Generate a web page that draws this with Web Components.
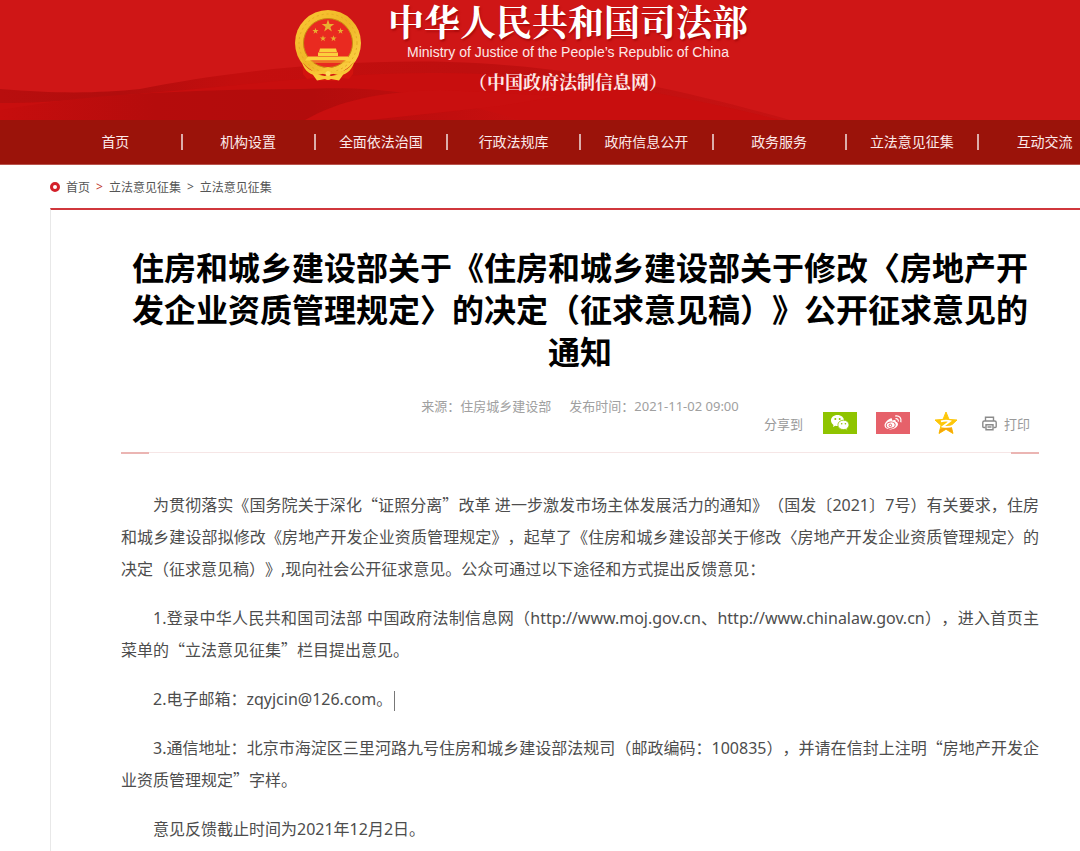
<!DOCTYPE html>
<html lang="zh-CN">
<head>
<meta charset="utf-8">
<title>中华人民共和国司法部</title>
<style>
  body {
    margin: 0;
    background: #fff;
    color: #4d4d4d;
    font-family: "Noto Sans", "Noto Sans CJK SC", sans-serif;
    text-spacing-trim: space-all;
    overflow-x: hidden;
  }
</style>
</head>
<body>
<moj-page></moj-page>

<script>
class MojEmblem extends HTMLElement {
  constructor() {
    super();
    this.attachShadow({ mode: "open" });
    this.shadowRoot.innerHTML = `
      <style>
        :host { display: block; }
        svg { display: block; width: 68px; height: 72px; }
      </style>
      <svg viewBox="0 0 68 72" role="img" aria-label="国徽">
        <defs>
          <linearGradient id="gold" x1="0" y1="0" x2="1" y2="1">
            <stop offset="0" stop-color="#fbc936"/>
            <stop offset=".5" stop-color="#efb526"/>
            <stop offset="1" stop-color="#ffd84c"/>
          </linearGradient>
          <path id="star" d="M0-6 1.4-1.9 5.7-1.9 2.2.8 3.5 4.9 0 2.4-3.5 4.9-2.2.8-5.7-1.9-1.4-1.9Z"/>
        </defs>
        <circle cx="34" cy="33" r="33" fill="url(#gold)"/>
        <circle cx="34" cy="33" r="29" fill="none" stroke="#e3ab22" stroke-width="1" stroke-dasharray="2 3"/>
        <path d="M8 52Q20 66 34 64 48 66 60 52L59 64 55 69 48 68 42 71H26L20 68 13 69 9 64Z" fill="#d3130e"/>
        <circle cx="34" cy="33" r="24.500" fill="#e92a20" stroke="#c98a12"/>
        <g fill="#e8b031">
          <use href="#star" transform="translate(34 16) scale(1.100)"/>
          <use href="#star" transform="translate(21.500 21) scale(.55)"/>
          <use href="#star" transform="translate(46.500 21) scale(.55)"/>
          <use href="#star" transform="translate(29 28.500) scale(.55)"/>
          <use href="#star" transform="translate(39.500 28.500) scale(.55)"/>
        </g>
        <path d="M26 38.500h16l1 3.500H25ZM24 42.500h20v3.500H24ZM14 46.500h40l3 4H11Z" fill="#fbd03c"/>
        <path d="M12 52h44" stroke="#f3b92d"/>
        <path d="M7 49c5 11 14 15 22 11q2-3 5-3t5 3c8 4 17 0 22-11-2 12-11 19-21 15q-3-4-6-4t-6 4C18 68 9 61 7 49Z" fill="#f7c535"/>
        <path d="M18 63.500 31 66q3-2 6 0l13-2.500-5 7-8-1.500q-3 2-6 0l-8 1.500Z" fill="#f9cc38"/>
        <circle cx="34" cy="63.500" r="2.500" fill="#ffdc58"/>
      </svg>
    `;
  }
}

class MojBanner extends HTMLElement {
  constructor() {
    super();
    this.attachShadow({ mode: "open" });
    this.shadowRoot.innerHTML = `
      <style>
        :host {
          display: grid;
          height: 120px;
          background: #cf1616;
          overflow: hidden;
        }
        .wave, .brand { grid-area: 1 / 1; }
        .wave { width: 100%; height: 120px; }
        .brand {
          display: flex;
          align-items: flex-start;
          justify-content: center;
          gap: 26px;
          padding-right: 38px;
          color: #fff;
        }
        moj-emblem { margin-top: 10px; }
        .names { display: flex; flex-direction: column; align-items: center; }
        h1 {
          margin: 0;
          font: 700 36px/42px "Noto Serif CJK SC", "Noto Sans CJK SC", serif;
          text-shadow: 1px 2px 2px #8008;
        }
        p { margin: 0; }
        .en { font: 14px/20px "Liberation Sans", sans-serif; color: #fde8e8; }
        .sub {
          margin-top: 7px;
          font: 700 18px/24px "Noto Serif CJK SC", "Noto Sans CJK SC", serif;
          color: #fde8e8;
        }
      </style>
      <svg class="wave" viewBox="0 0 1080 120" preserveAspectRatio="none" aria-hidden="true">
        <defs>
          <linearGradient id="far" x1="0" x2="1" y1="0" y2="0">
            <stop offset="0" stop-color="#b80e0e"/>
            <stop offset=".15" stop-color="#b20d0d"/>
            <stop offset=".3" stop-color="#c40e0e"/>
            <stop offset=".6" stop-color="#be0f0f"/>
            <stop offset="1" stop-color="#c61212"/>
          </linearGradient>
          <linearGradient id="near" x1="0" x2="1" y1="0" y2="0">
            <stop offset="0" stop-color="#c60d0d"/>
            <stop offset=".3" stop-color="#b50c0c"/>
            <stop offset=".6" stop-color="#b20c0c"/>
            <stop offset="1" stop-color="#c80f0f"/>
          </linearGradient>
        </defs>
        <path d="M0 89C60 94 100 93 140 89 220 73 330 59 450 62 580 66 690 92 790 120H0Z" fill="url(#far)"/>
        <path d="M0 103C60 103 100 97 160 92 260 84 330 73 440 73 580 74 690 98 780 120H0Z" fill="#c80e0e"/>
        <path d="M0 110C90 94 180 90 300 89 370 86 420 90 520 120H0Z" fill="url(#near)"/>
        <path d="M305 120C340 100 380 92 440 90L560 96 500 106 370 120Z" fill="#c90f0f"/>
      </svg>
      <div class="brand">
        <moj-emblem></moj-emblem>
        <div class="names">
          <h1>中华人民共和国司法部</h1>
          <p class="en" lang="en">Ministry of Justice of the People’s Republic of China</p>
          <p class="sub">（中国政府法制信息网）</p>
        </div>
      </div>
    `;
  }
}

class MojNav extends HTMLElement {
  constructor() {
    super();
    this.attachShadow({ mode: "open" });
    const items = ["首页", "机构设置", "全面依法治国", "行政法规库", "政府信息公开", "政务服务", "立法意见征集", "互动交流"];
    this.shadowRoot.innerHTML = `
      <style>
        :host { display: block; background: #9b130a; border-bottom: 1px solid #b9534c; }
        nav { display: flex; align-items: center; height: 44px; margin: 0 -30px 0 50px; }
        a {
          flex: 1 1 0;
          text-align: center;
          font-size: 14px;
          line-height: 16px;
          color: #fbeaea;
          text-decoration: none;
          white-space: nowrap;
        }
        a:not(:last-child) { border-right: 2px solid #dcaeab; }
      </style>
      <nav>${items.map(t => `<a href="#">${t}</a>`).join("")}</nav>
    `;
  }
}

class MojCrumbs extends HTMLElement {
  constructor() {
    super();
    this.attachShadow({ mode: "open" });
    this.shadowRoot.innerHTML = `
      <style>
        :host { display: block; }
        nav {
          display: flex;
          align-items: center;
          gap: 6px;
          height: 43px;
          font-size: 12px;
          color: #555;
        }
        i {
          width: 4px;
          height: 4px;
          border: 3px solid #d3202a;
          border-radius: 50%;
        }
        a { color: inherit; text-decoration: none; }
        .first { color: #c0392f; }
      </style>
      <nav aria-label="当前位置">
        <i></i>
        <a href="#">首页</a><span class="first">&gt;</span>
        <a href="#">立法意见征集</a><span>&gt;</span>
        <a href="#">立法意见征集</a>
      </nav>
    `;
  }
}

class ShareBar extends HTMLElement {
  constructor() {
    super();
    this.attachShadow({ mode: "open" });
    this.shadowRoot.innerHTML = `
      <style>
        :host { display: flex; align-items: center; font-size: 13px; color: #999; }
        button {
          display: flex;
          align-items: center;
          padding: 0;
          border: 0;
          background: none;
          font: inherit;
          color: inherit;
          cursor: pointer;
        }
        .box { justify-content: center; width: 34px; height: 22px; }
        .wechat { margin-left: 20px; background: #8fc400; }
        .weibo { margin-left: 19px; background: #e6616a; }
        .qzone { margin-left: 24px; }
        .print { margin-left: 24px; gap: 7px; }
        svg { display: block; }
      </style>
      <span>分享到</span>
      <button class="box wechat" aria-label="微信">
        <svg width="20" height="18" viewBox="0 0 20 18">
          <path d="M7.5 1C3.6 1 1 3.4 1 6.500c0 1.900 1 3.400 2.500 4.400L3 13l2.300-1.200c.7.200 1.400.3 2.200.3 3.600 0 6.500-2.300 6.500-5.500S11.100 1 7.500 1Z" fill="#fff"/>
          <circle cx="5.300" cy="5" r="1" fill="#8fc400"/><circle cx="9.700" cy="5" r="1" fill="#8fc400"/>
          <path d="M13.500 6.200c-3.300 0-5.600 2.100-5.600 4.700s2.300 4.700 5.600 4.700c.6 0 1.200-.1 1.800-.3l2 1.100-.5-1.800c1.400-.9 2.200-2.200 2.200-3.700 0-2.600-2.300-4.700-5.500-4.700Z" fill="#fff" stroke="#8fc400" stroke-width=".8"/>
          <circle cx="11.700" cy="9.800" r=".8" fill="#8fc400"/><circle cx="15.400" cy="9.800" r=".8" fill="#8fc400"/>
        </svg>
      </button>
      <button class="box weibo" aria-label="微博">
        <svg width="20" height="18" viewBox="0 0 20 18" fill="none" stroke="#fff">
          <path d="M7.500 4.500c1.300-.5 2 .2 1.500 2 2-.9 4.200-.8 3.800 1.300 2 .5 2.700 2 1.900 3.800-1 2.300-4 3.900-7.100 3.900-3.500 0-6.100-1.800-6.100-4.200 0-2.300 3-5.700 6-6.800Z" fill="#fff" stroke="none"/>
          <ellipse cx="7.700" cy="11.100" rx="4.500" ry="3.200" stroke="#e6616a" transform="rotate(-8 8 11)"/>
          <circle cx="7.300" cy="11.400" r="1.300" stroke="#e6616a"/>
          <path d="M12.500 4.700c2-.3 3.200 1 2.700 3" stroke-width="1.200"/>
          <path d="M12.300 2c4.200-.6 6.600 2.300 5.500 6.200" stroke-width="1.300"/>
        </svg>
      </button>
      <button class="qzone" aria-label="QQ空间">
        <svg width="24" height="24" viewBox="0 0 24 24">
          <path d="M12 1 15 8.400 23 9 17 14.500 19 22.500 12 18.300 5 22.500 7 14.500 1 9 9 8.400Z" fill="#fdc70a" stroke="#fdc70a" stroke-linejoin="round"/>
          <path d="M17 14.500 19 22.500 12 18.300 5 22.500 6 18Z" fill="#f7a60a"/>
          <path d="M7 10.300q5-1.300 9-.2L9 15.500q5 1 10-.6" fill="none" stroke="#fff" stroke-width="1.800"/>
        </svg>
      </button>
      <button class="print">
        <svg width="15" height="15" viewBox="0 0 15 15" fill="none" stroke="#8b8b8b" stroke-width="1.400">
          <path d="M3.500 5V1.200h8V5M3.500 11.500H1.800Q.8 11.500.8 10.500V6.500Q.8 5 2.300 5h10.400q1.500 0 1.500 1.500v4q0 1-1 1h-1.700"/>
          <path d="M4 8.800h7v5H4ZM5.500 11h4"/>
        </svg>
        打印
      </button>
    `;
  }
}

class NoticeArticle extends HTMLElement {
  constructor() {
    super();
    this.attachShadow({ mode: "open" });
    this.shadowRoot.innerHTML = `
      <style>
        :host {
          display: block;
          padding: 37px 71px 20px 70px;
          border-top: 2px solid #d0373c;
          border-left: 1px solid #e8e8e8;
        }
        .title {
          margin: 0 10px;
          text-align: center;
          font-size: 32px;
          font-weight: 700;
          line-height: 42px;
          color: #000;
        }
        .meta {
          display: flex;
          justify-content: center;
          gap: 18px;
          margin-top: 23px;
          font-size: 13px;
          line-height: 20px;
          color: #a0a0a0;
        }
        .share { display: flex; justify-content: flex-end; margin: -5px 9px 0 0; }
        .rule {
          display: flex;
          justify-content: space-between;
          margin-top: 17px;
          background: linear-gradient(#f6e6e6, #f6e6e6) 0 0 / 100% 1px no-repeat;
        }
        .rule::before, .rule::after {
          content: "";
          width: 28px;
          height: 2px;
          background: #ebb5b3;
        }
        .body { margin-top: 35px; font-size: 16px; line-height: 32px; }
      </style>
      <h2 class="title"><slot name="title"></slot></h2>
      <div class="meta"><slot name="meta"></slot></div>
      <div class="share"><share-bar></share-bar></div>
      <div class="rule"></div>
      <div class="body"><slot></slot></div>
    `;
  }
}

class MojPage extends HTMLElement {
  constructor() {
    super();
    this.attachShadow({ mode: "open" });
    this.shadowRoot.innerHTML = `
      <style>
        :host { display: block; overflow: hidden; }
        main { margin: 0 -30px 0 50px; }
        p {
          margin: 0 0 17px;
          text-indent: 2em;
          text-align: justify;
        }
        /* full-width quotes come from the CJK face */
        q { quotes: none; font-family: "Noto Sans CJK SC", sans-serif; line-height: 1; }
        .caret {
          display: inline-block;
          height: 20px;
          margin-left: 2px;
          border-left: 1px solid #777;
          vertical-align: middle;
        }
      </style>
      <moj-banner></moj-banner>
      <moj-nav></moj-nav>
      <main>
        <moj-crumbs></moj-crumbs>
        <notice-article>
          <span slot="title">住房和城乡建设部关于《住房和城乡建设部关于修改〈房地产开发企业资质管理规定〉的决定（征求意见稿）》公开征求意见的通知</span>
          <span slot="meta">来源：住房城乡建设部</span>
          <span slot="meta">发布时间：2021-11-02 09:00</span>
          <p>为贯彻落实《国务院关于深化<q>“证照分离”</q>改革 进一步激发市场主体发展活力的通知》（国发〔2021〕7号）有关要求，住房和城乡建设部拟修改《房地产开发企业资质管理规定》，起草了《住房和城乡建设部关于修改〈房地产开发企业资质管理规定〉的决定（征求意见稿）》,现向社会公开征求意见。公众可通过以下途径和方式提出反馈意见：</p>
          <p>1.登录中华人民共和国司法部 中国政府法制信息网（http://www.moj.gov.cn、http://www.chinalaw.gov.cn），进入首页主菜单的<q>“立法意见征集”</q>栏目提出意见。</p>
          <p>2.电子邮箱：zqyjcin@126.com。<span class="caret"></span></p>
          <p>3.通信地址：北京市海淀区三里河路九号住房和城乡建设部法规司（邮政编码：100835），并请在信封上注明<q>“房地产开发企业资质管理规定”</q>字样。</p>
          <p>意见反馈截止时间为2021年12月2日。</p>
        </notice-article>
      </main>
    `;
  }
}

customElements.define("moj-emblem", MojEmblem);
customElements.define("moj-banner", MojBanner);
customElements.define("moj-nav", MojNav);
customElements.define("moj-crumbs", MojCrumbs);
customElements.define("share-bar", ShareBar);
customElements.define("notice-article", NoticeArticle);
customElements.define("moj-page", MojPage);
</script>
</body>
</html>
